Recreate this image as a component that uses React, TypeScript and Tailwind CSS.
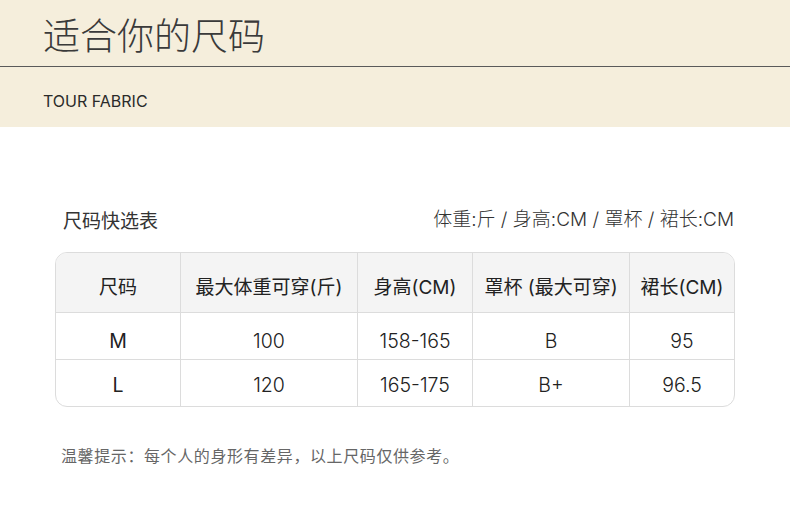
const FONT = "font-['Noto_Sans_CJK_SC','Noto_Sans',sans-serif]";
const MIX = "font-['Inter','Noto_Sans_CJK_SC',sans-serif]";

const rows = [
  { size: "M", weight: "100", height: "158-165", cup: "B", skirt: "95", pad: "pt-[12px]" },
  { size: "L", weight: "120", height: "165-175", cup: "B+", skirt: "96.5", pad: "pt-[5px]" },
];

const cols = "grid grid-cols-[124px_177px_115px_157px_105px]";

export default function App() {
  return (
    <div className={`h-[520px] w-[790px] bg-white ${FONT}`}>
      <header className="h-[127px] bg-[#f5eedc]">
        <div className="h-[66px] px-[43px] pt-[10px]">
          <h1 className="text-[37px] font-light leading-[48px] text-[#3a3a3a]">适合你的尺码</h1>
        </div>
        <div className="h-px bg-[#5a5a5a]" />
        <p className="px-[43px] pt-[24px] font-['Inter','Noto_Sans',sans-serif] text-[16px] leading-5 text-[#2a2a2a]">
          TOUR FABRIC
        </p>
      </header>

      <section className="px-[55px] pt-[79px]">
        <div className="flex items-end justify-between pl-[8px] pr-[1px] text-[#333]">
          <p className="text-[19px] leading-7">尺码快选表</p>
          <p className={`${MIX} text-[19px] font-light leading-7`}>体重:斤 / 身高:CM / 罩杯 / 裙长:CM</p>
        </div>

        <div className="mt-[18px] w-[680px] overflow-hidden rounded-[12px] border border-[#dcdcdc] text-[#222]">
          <div className={`${cols} h-[59px] bg-[#f4f4f4] ${MIX} text-[19px]`}>
            {["尺码", "最大体重可穿(斤)", "身高(CM)", "罩杯 (最大可穿)", "裙长(CM)"].map((h, i) => (
              <div
                key={h}
                className={`flex items-center justify-center pt-[11px] ${i ? "border-l border-[#dcdcdc]" : ""}`}
              >
                {h}
              </div>
            ))}
          </div>
          {rows.map((r) => (
            <div key={r.size} className={`${cols} h-[47px] border-t border-[#dcdcdc] text-[19.5px]`}>
              {[r.size, r.weight, r.height, r.cup, r.skirt].map((v, i) => (
                <div
                  key={i}
                  className={`flex items-center justify-center ${r.pad} font-['Inter','Noto_Sans',sans-serif] ${
                    i ? "border-l border-[#dcdcdc] font-light" : "font-normal"
                  }`}
                >
                  {v}
                </div>
              ))}
            </div>
          ))}
        </div>

        <p className="mt-[36px] pl-[6px] text-[16px] leading-6 tracking-[0.6px] text-[#666]">
          温馨提示：每个人的身形有差异，以上尺码仅供参考。
        </p>
      </section>
    </div>
  );
}
